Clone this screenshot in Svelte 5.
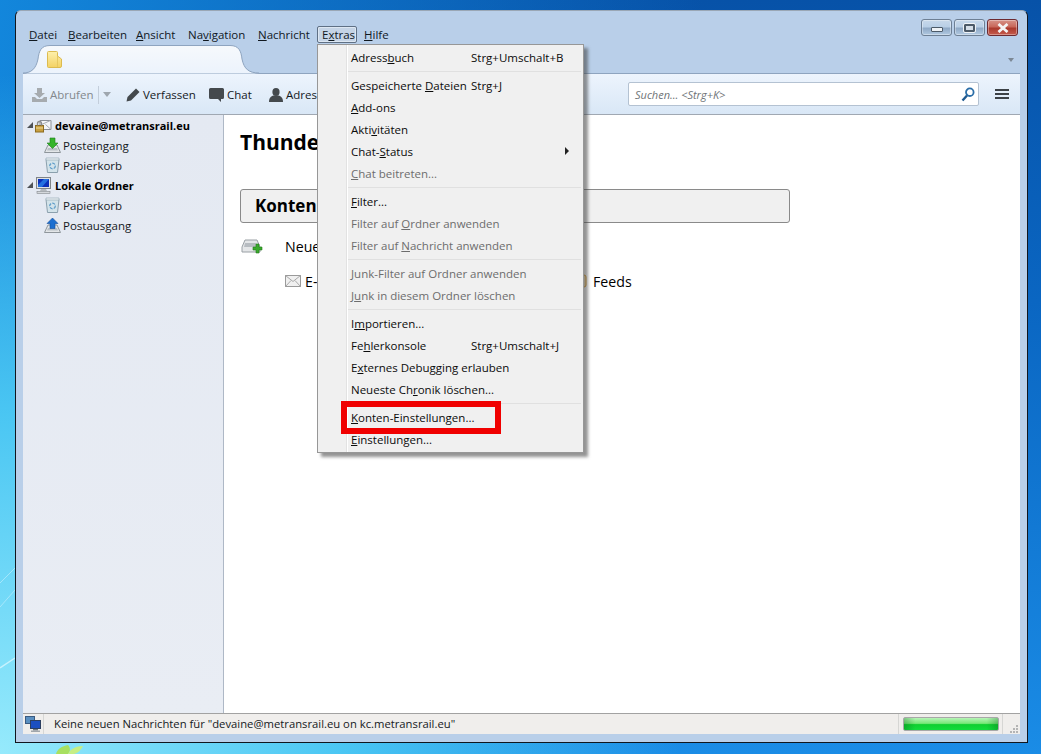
<script>
  const menus = [
    { label: 'D|atei', width: 39 },
    { label: 'B|earbeiten', width: 68 },
    { label: 'A|nsicht', width: 52 },
    { label: 'Na|v|igation', width: 70 },
    { label: 'N|achricht', width: 64 },
    { label: 'E|x|tras', width: 40, open: true },
    { label: 'H|ilfe', width: 40 }
  ]

  const extras = [
    { label: 'Adress|b|uch', key: 'Strg+Umschalt+B' },
    { sep: true },
    { label: 'Gespeicherte |D|ateien', key: 'Strg+J' },
    { label: '|A|dd-ons' },
    { label: 'Akti|v|itäten' },
    { label: 'Chat-|S|tatus', sub: true },
    { label: '|C|hat beitreten...', off: true },
    { sep: true },
    { label: '|F|ilter...' },
    { label: 'Filter auf |O|rdner anwenden', off: true },
    { label: 'Filter auf |N|achricht anwenden', off: true },
    { sep: true },
    { label: '|J|unk-Filter auf Ordner anwenden', off: true },
    { label: 'J|u|nk in diesem Ordner löschen', off: true },
    { sep: true },
    { label: 'I|m|portieren...' },
    { label: 'Fe|h|lerkonsole', key: 'Strg+Umschalt+J' },
    { label: 'E|x|ternes Debugging erlauben' },
    { label: 'Neueste Ch|r|onik löschen...' },
    { sep: true },
    { label: '|K|onten-Einstellungen...', mark: true },
    { label: '|E|instellungen...' }
  ]

  const tree = [
    { name: 'devaine@metransrail.eu', icon: 'account', top: true },
    { name: 'Posteingang', icon: 'inbox' },
    { name: 'Papierkorb', icon: 'trash' },
    { name: 'Lokale Ordner', icon: 'computer', top: true },
    { name: 'Papierkorb', icon: 'trash' },
    { name: 'Postausgang', icon: 'outbox' }
  ]

  function parts(label) {
    const p = label.split('|')
    if (p.length === 2) return ['', p[0], p[1]]
    return p
  }
</script>

{#snippet accel(label)}
  {@const p = parts(label)}
  {p[0]}<u>{p[1]}</u>{p[2]}
{/snippet}

{#snippet treeIcon(kind)}
  {#if kind === 'account'}
    <svg width="17" height="16" viewBox="0 0 17 16">
      <path d="M5 3.500h11v9H5z" fill="#f4f6f8" stroke="#8a8f96"/>
      <path d="M5.500 8l10-4.500M15.500 12l-5-4.500" fill="none" stroke="#a5aab0"/>
      <rect x="0.500" y="8.500" width="8" height="6.500" fill="#c9a040" stroke="#8c6c20"/>
      <path d="M2.500 8.500V6.500a2 2 0 0 1 4 0v2" fill="none" stroke="#8c8c8c" stroke-width="1.300"/>
      <path d="M1 11h7" stroke="#f0dc9a"/>
    </svg>
  {:else if kind === 'inbox' || kind === 'outbox'}
    <svg width="17" height="17" viewBox="0 0 17 17">
      <path d="M4 8h9l3.500 7.500H0.500z" fill="#e3e6e8" stroke="#8f969c"/>
      <path d="M4 11h9l1 2.500H3z" fill="#b9c0c6"/>
      {#if kind === 'inbox'}
        <path d="M6 1h5v5h3l-5.500 5.500L3 6h3z" fill="#35b42a" stroke="#1f7d1c" stroke-width=".6"/>
      {:else}
        <path d="M8.500 1L14 6.500h-3v5H6v-5H3z" fill="#1c6fd0" stroke="#124e9a" stroke-width=".6"/>
      {/if}
    </svg>
  {:else if kind === 'trash'}
    <svg width="17" height="16" viewBox="-1 0 17 16">
      <path d="M1 2.500h13l-1.500 13h-10z" fill="#d3e3ea" stroke="#8ba0ad"/>
      <path d="M1 1h13v2H1z" fill="#eef3f6" stroke="#9aadb8" stroke-width=".7"/>
      <circle cx="7.500" cy="9" r="2.800" fill="none" stroke="#5d9cc9" stroke-width="1.300" stroke-dasharray="3 1.200"/>
    </svg>
  {:else}
    <svg width="17" height="17" viewBox="0 0 17 17">
      <rect x="1.500" y="0.500" width="14" height="11" fill="#dfe2e6" stroke="#7f8488"/>
      <rect x="3" y="2" width="11" height="8" fill="#0c2fb8"/>
      <path d="M3 8l6-6h5L7 10H3z" fill="#2470e0"/>
      <path d="M6 12h5l1 2H5z" fill="#b5b9bd"/>
      <rect x="2" y="14.500" width="13" height="2" fill="#d5d8dc" stroke="#83888c" stroke-width=".6"/>
    </svg>
  {/if}
{/snippet}

<div class="desktop">
  <svg class="wallpaper" width="100" height="200" viewBox="0 0 100 200">
    <path d="M0 29L15 14M0 53L15 36" stroke="#d8f6ff" stroke-opacity=".5" fill="none"/>
    <path d="M0 114L15 104" stroke="#e4faff" stroke-opacity=".7" stroke-width="1.500" fill="none"/>
    <path d="M56 200c1-5 6-8 12-9 2 2 3 6 0 9z" fill="#a8e060"/>
    <path d="M68 200c2-5 8-8 15-8-2 4-5 7-9 8z" fill="#c6ee84"/>
  </svg>

  <div class="window">
    <div class="caption">
      <div class="controls">
        <button class="ctl" aria-label="Minimieren"><span class="glyphMin"></span></button>
        <button class="ctl" aria-label="Maximieren"><span class="glyphMax"></span></button>
        <button class="ctl close" aria-label="Schließen">
          <svg width="14" height="10" viewBox="0 0 14 10"><path d="M2.500 1l9 8M11.500 1l-9 8" stroke="#f4f4f4" stroke-width="2.800" fill="none"/></svg>
        </button>
      </div>
      <nav class="menubar">
        {#each menus as m}
          <span class="menuName" class:open={m.open} style="width: {m.width}px">{@render accel(m.label)}</span>
        {/each}
      </nav>
    </div>

    <div class="tabbar">
      <svg class="tabShape" width="236" height="29" viewBox="0 0 236 29">
        <defs>
          <linearGradient id="tabFill" x1="0" y1="0" x2="0" y2="1">
            <stop offset="0" stop-color="#f6f9fc"/>
            <stop offset="1" stop-color="#ecf3fc"/>
          </linearGradient>
        </defs>
        <path d="M0 28.500C8 28.500 13 24 15 14 16 6 18 .5 27 .5H207C216 .5 218 6 219 14 221 24 226 28.500 236 28.500z" fill="url(#tabFill)"/>
        <path d="M0 28C8 28 13 24 15 14 16 6 18 .5 27 .5H207C216 .5 218 6 219 14 221 24 226 28 236 28" fill="none" stroke="#8ea4bf"/>
      </svg>
      <svg class="folder" width="15" height="17" viewBox="0 0 15 17">
        <defs>
          <linearGradient id="folderFill" x1="0" y1="0" x2="0" y2="1">
            <stop offset="0" stop-color="#fdf0ac"/>
            <stop offset="1" stop-color="#f4d264"/>
          </linearGradient>
        </defs>
        <path d="M.5 1.500q0-1 1-1h8q1 0 1 1V5l4 3v7q0 1.500-1.500 1.500H1.500q-1 0-1-1z" fill="url(#folderFill)" stroke="#dcbb50"/>
        <path d="M10.500 5v11" stroke="#e6c862"/>
      </svg>
      <span class="tabArrow"></span>
    </div>

    <div class="toolbar">
      <div class="tool disabled">
        <svg width="15" height="14" viewBox="0 0 15 14">
          <path d="M5 0h5v5h3L7.500 10 2 5h3z" fill="#a6abaf"/>
          <path d="M0 9h3l2 2h5l2-2h3v5H0z" fill="#a6abaf"/>
        </svg>
        <span>Abrufen</span>
      </div>
      <span class="toolSep"></span>
      <span class="toolArrow"></span>
      <div class="tool verfassen">
        <svg width="14" height="14" viewBox="0 0 14 14">
          <path d="M10 0.500l3.500 3.500L5 12.500 0.500 13.500 1.500 9z" fill="#44494d"/>
        </svg>
        <span>Verfassen</span>
      </div>
      <div class="tool chat">
        <svg width="15" height="14" viewBox="0 0 15 14">
          <path d="M1.500 0h12q1.500 0 1.500 1.500v8q0 1.500-1.500 1.500H12v3l-3-3H1.500Q0 11 0 9.500v-8Q0 0 1.500 0z" fill="#44494d"/>
        </svg>
        <span>Chat</span>
      </div>
      <div class="tool adress">
        <svg width="14" height="14" viewBox="0 0 14 14">
          <ellipse cx="7" cy="4" rx="3.600" ry="4" fill="#44494d"/>
          <path d="M0 14c0-4 2-6 4.500-6.500h5C12 8 14 10 14 14z" fill="#44494d"/>
        </svg>
        <span>Adressbuch</span>
      </div>
      <div class="search">
        <em>Suchen... &lt;Strg+K&gt;</em>
        <svg width="14" height="15" viewBox="0 0 14 15">
          <circle cx="8.800" cy="5.200" r="3.800" fill="none" stroke="#2b6ea8" stroke-width="1.800"/>
          <path d="M6 8.500L1.500 13.500" stroke="#1f5a90" stroke-width="2.400"/>
        </svg>
      </div>
      <div class="burger"><span></span><span></span><span></span></div>
    </div>

    <div class="main">
      <aside class="sidebar">
        {#each tree as row}
          <div class="treeRow" class:top={row.top}>
            {#if row.top}<span class="twisty"></span>{/if}
            {@render treeIcon(row.icon)}
            <span>{row.name}</span>
          </div>
        {/each}
      </aside>

      <section class="content">
        <h1>Thunderbird Mail</h1>
        <div class="panelHead">Konten</div>
        <div class="newRow">
          <svg width="23" height="15" viewBox="0 0 23 15">
            <path d="M4 1h12l3 7v5H1V8z" fill="#e4e6e8" stroke="#9aa0a5"/>
            <path d="M4 4h11l1 4H3z" fill="#b7bcc1"/>
            <path d="M15 5h3v3h3v3h-3v3h-3v-3h-3V8h3z" fill="#3aaa2c" stroke="#237a1c" stroke-width=".6"/>
          </svg>
          <span>Neues Konto erstellen</span>
        </div>
        <div class="linkRow">
          <svg width="16" height="12" viewBox="0 0 16 12">
            <rect x=".5" y=".5" width="15" height="11" fill="#f0f0f0" stroke="#9a9a9a"/>
            <path d="M.5 .5L8 6.500 15.500 .5M.5 11.500L6 5.500M15.500 11.500L10 5.500" fill="none" stroke="#a8a8a8"/>
          </svg>
          <span class="mail">E-Mail</span>
          <svg class="feedIcon" width="14" height="14" viewBox="0 0 14 14">
            <rect x="1" y="1" width="12" height="12" rx="2" fill="#fbe9c0" stroke="#e0a030"/>
          </svg>
          <span>Feeds</span>
        </div>
      </section>
    </div>

    <footer class="statusbar">
      <span class="netCell">
        <svg width="16" height="16" viewBox="0 0 16 16">
          <rect x=".5" y=".5" width="9" height="7" fill="#5a8fc0" stroke="#3a5a80"/>
          <rect x="5.500" y="4.500" width="10" height="8" fill="#1c4fc0" stroke="#2c3f60"/>
          <path d="M8 13h5v1.500H8z" fill="#70787f"/>
          <path d="M6 14.500h9V16H6z" fill="#a0a6ac"/>
        </svg>
      </span>
      <span class="statusText">Keine neuen Nachrichten für "devaine@metransrail.eu on kc.metransrail.eu"</span>
      <span class="progressCell"><span class="progress"></span></span>
      <span class="grip">
        <svg width="9" height="9" viewBox="0 0 9 9">
          <path d="M7 0h2v2H7zM4 3h2v2H4zM7 3h2v2H7zM1 6h2v2H1zM4 6h2v2H4zM7 6h2v2H7z" fill="#b4b4b4"/>
        </svg>
      </span>
    </footer>

    <div class="dropdown">
      {#each extras as item}
        {#if item.sep}
          <div class="menuSep"></div>
        {:else}
          <div class="menuItem" class:off={item.off}>
            <span class="itemLabel">{@render accel(item.label)}</span>
            {#if item.key}<span class="itemKey">{item.key}</span>{/if}
            {#if item.sub}<span class="subArrow"></span>{/if}
            {#if item.mark}<span class="redBox"></span>{/if}
          </div>
        {/if}
      {/each}
    </div>
  </div>
</div>

<style>
  :global(body) {
    margin: 0;
    overflow: hidden;
  }
  .desktop {
    position: relative;
    height: 754px;
    box-sizing: border-box;
    padding: 10px 0 0 15px;
    font-family: "Open Sans", "Liberation Sans", sans-serif;
    font-size: 11.5px;
    color: #000;
    background:
      radial-gradient(680px 680px at 0 754px, #96eafc 0%, rgba(80, 205, 245, .9) 50%, rgba(30, 150, 230, 0) 100%),
      linear-gradient(100deg, rgba(20, 140, 225, .9), rgba(10, 110, 210, 0) 60%),
      linear-gradient(180deg, #0752a8 0%, #0a66c2 40%, #1a8ce6 100%);
  }
  .wallpaper {
    position: absolute;
    left: 0;
    bottom: 0;
  }
  .window {
    position: relative;
    box-sizing: border-box;
    width: 1013px;
    height: 733px;
    display: flex;
    flex-direction: column;
    padding: 0 7px 8px;
    background: #b9cfe9;
    border: 1px solid #10161e;
    border-top-color: #9aa7b5;
    border-radius: 6px 6px 0 0;
  }
  .caption {
    position: relative;
    height: 34px;
    flex: none;
  }
  .controls {
    position: absolute;
    right: 2px;
    top: 8px;
    display: flex;
    gap: 2px;
  }
  .ctl {
    width: 31px;
    height: 17px;
    padding: 0;
    display: flex;
    align-items: center;
    justify-content: center;
    border: 1px solid #6d7f94;
    border-radius: 3px;
    background: linear-gradient(180deg, #c7d8ea 0%, #b9cfe6 45%, #8fa9c6 55%, #b1c9e1 100%);
    box-shadow: inset 0 0 0 1px rgba(255, 255, 255, .35);
  }
  .close {
    border-color: #6d2a30;
    background: linear-gradient(180deg, #d69388 0%, #c9685a 45%, #ab3a2d 55%, #c65c4d 100%);
  }
  .glyphMin {
    width: 10px;
    height: 3px;
    margin-top: 4px;
    background: #eef2f6;
    border: 1px solid #4c5a68;
    border-radius: 1px;
  }
  .glyphMax {
    width: 7px;
    height: 4px;
    background: #d4dee8;
    border: 2px solid #4c5a68;
    outline: 1px solid #eef2f6;
    border-radius: 1px;
  }
  .menubar {
    position: absolute;
    left: 1px;
    top: 15px;
    display: flex;
    line-height: 15px;
  }
  .menuName {
    box-sizing: border-box;
    height: 17px;
    padding-left: 4px;
    border: 1px solid transparent;
    border-radius: 2px;
    color: #10181f;
    white-space: nowrap;
  }
  .open {
    margin-right: 2px;
    background: #c5d4e6;
    border-color: #5f7085;
    box-shadow: inset 0 0 0 1px #dde7f2;
  }
  .tabbar {
    position: relative;
    height: 29px;
    flex: none;
    box-sizing: border-box;
    padding: 6px 0 0 24px;
    border-bottom: 1px solid #8ea4bf;
  }
  .tabShape {
    position: absolute;
    left: 0;
    top: 0;
  }
  .folder {
    position: relative;
    display: block;
  }
  .tabArrow {
    position: absolute;
    right: 6px;
    top: 13px;
    border: 3px solid transparent;
    border-top: 4px solid #7c8894;
    border-bottom: 0;
  }
  .toolbar {
    position: relative;
    flex: none;
    height: 41px;
    box-sizing: border-box;
    display: flex;
    align-items: center;
    padding: 1px 0 0 9px;
    background: linear-gradient(180deg, #edf4fd 0%, #d9e7f6 100%);
    border-bottom: 1px solid #a0a8b2;
  }
  .tool {
    display: flex;
    align-items: center;
    gap: 3px;
    color: #15191d;
  }
  .disabled {
    color: #83888c;
    width: 66px;
  }
  .toolSep {
    width: 1px;
    height: 18px;
    background: #c3cedb;
  }
  .toolArrow {
    margin: 0 15px 0 4px;
    border: 4px solid transparent;
    border-top: 5px solid #9ea6ae;
    border-bottom: 0;
  }
  .verfassen {
    width: 83px;
  }
  .chat {
    width: 60px;
  }
  .search {
    position: absolute;
    left: 605px;
    top: 8px;
    width: 351px;
    height: 24px;
    box-sizing: border-box;
    display: flex;
    align-items: center;
    justify-content: space-between;
    padding: 0 3px 0 6px;
    background: #fff;
    border: 1px solid #b4c2d2;
    border-radius: 2px;
  }
  .search em {
    color: #6f7478;
    font-size: 11px;
  }
  .burger {
    position: absolute;
    left: 972px;
    top: 15px;
    display: flex;
    flex-direction: column;
    gap: 2px;
  }
  .burger span {
    width: 14px;
    height: 2px;
    background: #3c4146;
  }
  .main {
    flex: 1;
    display: flex;
    min-height: 0;
  }
  .sidebar {
    width: 201px;
    flex: none;
    box-sizing: border-box;
    background: linear-gradient(180deg, #e4e9f2, #e9edf4);
    border-right: 1px solid #aeb8c6;
  }
  .treeRow {
    height: 20px;
    display: flex;
    align-items: center;
    gap: 2px;
    padding-left: 21px;
    color: #15191d;
  }
  .treeRow.top {
    gap: 3px;
    padding-left: 4px;
    font-size: 11px;
    font-weight: 700;
    color: #000;
  }
  .twisty {
    width: 0;
    height: 0;
    margin-right: -1px;
    border-left: 6px solid transparent;
    border-bottom: 6px solid #4e5256;
  }
  .content {
    flex: 1;
    background: #fff;
    padding: 13px 0 0 16px;
    min-width: 0;
  }
  h1 {
    margin: 0 0 33px;
    height: 28px;
    font-size: 21px;
    line-height: 28px;
    font-weight: 700;
  }
  .panelHead {
    width: 550px;
    height: 34px;
    box-sizing: border-box;
    padding-left: 14px;
    line-height: 32px;
    font-size: 17px;
    font-weight: 700;
    background: #f0f0f0;
    border: 1px solid #8a8a8a;
    border-radius: 3px;
  }
  .newRow {
    display: flex;
    align-items: center;
    gap: 21px;
    height: 22px;
    margin-top: 12px;
    padding-left: 1px;
    font-size: 14.2px;
  }
  .linkRow {
    display: flex;
    align-items: center;
    height: 22px;
    margin-top: 13px;
    padding-left: 45px;
    font-size: 14.2px;
  }
  .mail {
    margin-left: 4px;
    width: 268px;
  }
  .feedIcon {
    margin-right: 6px;
  }
  .statusbar {
    flex: none;
    height: 21px;
    box-sizing: border-box;
    display: flex;
    align-items: center;
    background: #f0eeec;
    border-top: 1px solid #a2a2a2;
    color: #15191d;
  }
  .netCell {
    width: 20px;
    height: 100%;
    flex: none;
    display: flex;
    align-items: center;
    justify-content: center;
    border-right: 1px solid #d6d6d4;
  }
  .statusText {
    flex: 1;
    padding: 0 0 2px 10px;
    font-size: 11.27px;
  }
  .progressCell {
    width: 105px;
    height: 100%;
    box-sizing: border-box;
    display: flex;
    align-items: center;
    justify-content: center;
    border-left: 1px solid #d6d6d4;
    border-right: 1px solid #d6d6d4;
  }
  .progress {
    width: 94px;
    height: 12px;
    border: 1px solid #a8a8a8;
    border-radius: 2px;
    background:
      linear-gradient(90deg, rgba(0, 90, 20, .3), rgba(0, 90, 20, 0) 12%, rgba(0, 90, 20, 0) 88%, rgba(0, 90, 20, .3)),
      linear-gradient(180deg, #b8f4b8 0%, #78e878 45%, #10cf30 55%, #12dc3c 100%);
  }
  .grip {
    width: 17px;
    height: 100%;
    display: flex;
    align-items: flex-end;
    justify-content: flex-end;
    padding-right: 2px;
    box-sizing: border-box;
  }
  .dropdown {
    position: absolute;
    left: 301px;
    top: 33px;
    width: 267px;
    height: 409px;
    box-sizing: border-box;
    padding: 2px 2px 0 0;
    background: #f0f0f0 linear-gradient(90deg, transparent 28px, #e2e2e2 28px, #e2e2e2 29px, #fff 29px, #fff 30px, transparent 30px);
    border: 1px solid #979797;
    box-shadow: 4px 4px 3px rgba(60, 60, 60, .55);
  }
  .menuItem {
    position: relative;
    height: 22px;
    box-sizing: border-box;
    display: flex;
    align-items: center;
    padding: 0 0 2px 33px;
    color: #0b0b0b;
  }
  .off {
    color: #6d6d6d;
  }
  .itemLabel {
    white-space: nowrap;
  }
  .itemKey {
    position: absolute;
    left: 153px;
    white-space: nowrap;
  }
  .subArrow {
    position: absolute;
    right: 12px;
    top: 6px;
    border: 4px solid transparent;
    border-left: 4px solid #222;
    border-right: 0;
  }
  .menuSep {
    height: 6px;
    margin-left: 30px;
    box-sizing: border-box;
    border-bottom: 3px solid #f0f0f0;
    border-top: 2px solid #f0f0f0;
    background: #e0e0e0;
  }
  .redBox {
    position: absolute;
    left: 23px;
    top: -6px;
    width: 160px;
    height: 33px;
    box-sizing: border-box;
    border: 6px solid #f00000;
  }
</style>
